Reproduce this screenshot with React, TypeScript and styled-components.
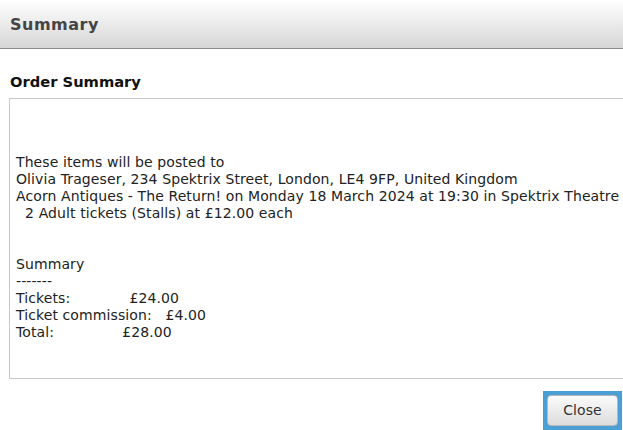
import React from "react";
import styled, { createGlobalStyle } from "styled-components";

const GlobalStyle = createGlobalStyle`
  html, body {
    margin: 0;
    padding: 0;
    background: #fff;
    overflow: hidden;
  }
  body {
    font-family: "DejaVu Sans", Verdana, sans-serif;
  }
`;

const Dialog = styled.div`
  width: 623px;
  height: 430px;
  display: flex;
  flex-direction: column;
  overflow: hidden;
`;

const TitleBar = styled.header`
  height: 49px;
  display: flex;
  align-items: center;
  padding: 1px 10px 0;
  box-sizing: border-box;
  background: linear-gradient(#ffffff, #d6d6d6);
  border-bottom: 1px solid #8a8a8a;
  flex-shrink: 0;
`;

const Title = styled.h1`
  margin: 0;
  font-size: 16px;
  letter-spacing: 0.5px;
  font-weight: bold;
  color: #444;
`;

const Body = styled.section`
  padding: 24px 0 0 9px;
  display: flex;
  flex-direction: column;
`;

const SectionHeading = styled.h2`
  margin: 0 0 7px 1px;
  font-size: 14.7px;
  font-weight: bold;
  color: #111;
  line-height: 18px;
`;

const SummaryBox = styled.div`
  width: 640px;
  height: 281px;
  border: 1px solid #c8c8c8;
  padding: 4px 6px 2px;
  box-sizing: border-box;
  font-size: 14px;
  letter-spacing: 0.1px;
  line-height: 17px;
  color: #222;
  white-space: pre;
  overflow: hidden;
`;

const Footer = styled.footer`
  display: flex;
  justify-content: flex-end;
  padding: 12px 1px 0 0;
`;

const Button = styled.button`
  border: 4px solid #4a9fd5;
  background: #4a9fd5;
  padding: 0;
  cursor: pointer;
`;

const ButtonFace = styled.span`
  display: block;
  width: 71px;
  height: 31px;
  box-sizing: border-box;
  border: 1px solid #b8b8b8;
  border-radius: 4px;
  background: linear-gradient(#fbfbfb, #dcdcdc);
  font-family: "DejaVu Sans", Verdana, sans-serif;
  font-size: 14px;
  letter-spacing: 0.1px;
  line-height: 29px;
  color: #333;
  text-align: center;
`;

const summaryText = `


These items will be posted to
Olivia Trageser, 234 Spektrix Street, London, LE4 9FP, United Kingdom
Acorn Antiques - The Return! on Monday 18 March 2024 at 19:30 in Spektrix Theatre
  2 Adult tickets (Stalls) at £12.00 each


Summary
-------
Tickets:             £24.00
Ticket commission:   £4.00
Total:               £28.00`;

export default function App() {
  return (
    <>
      <GlobalStyle />
      <Dialog>
        <TitleBar>
          <Title>Summary</Title>
        </TitleBar>
        <Body>
          <SectionHeading>Order Summary</SectionHeading>
          <SummaryBox>{summaryText}</SummaryBox>
        </Body>
        <Footer>
          <Button>
            <ButtonFace>Close</ButtonFace>
          </Button>
        </Footer>
      </Dialog>
    </>
  );
}
